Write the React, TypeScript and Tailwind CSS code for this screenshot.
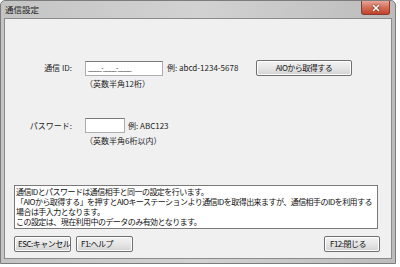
import { X } from "lucide-react";

const font = "font-['Meiryo_UI','Noto_Sans_CJK_JP','Liberation_Sans',sans-serif]";

function WinButton({ label, className }: { label: string; className?: string }) {
  return (
    <button
      className={`flex h-[16px] items-center whitespace-nowrap rounded-[2px] border border-[#707070] bg-gradient-to-b from-[#f3f3f3] via-[#e6e6e6] to-[#d3d3d3] text-[8px] leading-none tracking-[-0.5px] text-[#111] shadow-[inset_0_0_0_1px_#fcfcfc] ${className ?? ""}`}
    >
      {label}
    </button>
  );
}

function MemoText() {
  return (
    <div className="h-[44px] w-[364px] overflow-hidden border border-[#7a7a7a] bg-white px-[1px] pt-[1px] text-[8px] leading-[10px] tracking-[-0.55px] text-[#111]">
      <p>通信IDとパスワードは通信相手と同一の設定を行います。</p>
      <p className="whitespace-nowrap">
        「AIOから取得する」を押すとAIOキーステーションより通信IDを取得出来ますが、通信相手のIDを利用する
      </p>
      <p>場合は手入力となります。</p>
      <p>この設定は、現在利用中のデータのみ有効となります。</p>
    </div>
  );
}

export default function App() {
  return (
    <div className={`h-[267px] w-[400px] bg-white ${font}`}>
      <div className="flex h-[264px] w-[396px] flex-col rounded-t-[5px] border border-[#7c7c7c] bg-gradient-to-r from-[#c4c4c4] via-[#d2d2d2] to-[#bcbcbc]">
        {/* title bar */}
        <div className="flex h-[17px] shrink-0 items-start justify-between">
          <span className="pl-[4px] pt-[3px] text-[8.5px] leading-[10px] text-[#1c1c1c]">通信設定</span>
          <div className="mr-[5px] flex h-[14px] w-[29px] items-center justify-center rounded-b-[3px] border border-t-0 border-[#8a3a2c] bg-gradient-to-b from-[#e9a596] via-[#d26e58] to-[#c24129]">
            <X size={10} strokeWidth={3.5} className="text-white drop-shadow-[0_0_1px_#5a1a10]" />
          </div>
        </div>

        {/* client area */}
        <div className="mx-[3px] mb-[4px] flex flex-1 flex-col border border-[#8b8b8b] bg-[#f0f0f0] text-[8px] leading-[10px] text-[#1c1c1c]">
          <div className="mt-[41px] flex items-center">
            <span className="w-[67px] text-right">通信 ID:</span>
            <div className="ml-[13px] flex h-[15px] w-[78px] items-center border border-[#abadb3] border-t-[#7a7a7a] bg-white pl-[2px] font-['Liberation_Sans',sans-serif] text-[7px] tracking-[-0.6px] text-[#444]">
              ____-____-____
            </div>
            <span className="ml-[4px] w-[89px] whitespace-nowrap">例: abcd-1234-5678</span>
            <WinButton label="AIOから取得する" className="w-[96px] justify-center" />
          </div>
          <p className="ml-[80px] mt-[3px]">（英数半角12桁）</p>

          <div className="mt-[29px] flex items-center">
            <span className="w-[67px] text-right">パスワード:</span>
            <div className="ml-[13px] h-[15px] w-[40px] border border-[#abadb3] border-t-[#7a7a7a] bg-white" />
            <span className="ml-[3px] whitespace-nowrap">例: ABC123</span>
          </div>
          <p className="ml-[80px] mt-[3px]">（英数半角6桁以内）</p>

          <div className="ml-[9px] mt-[39px]">
            <MemoText />
          </div>

          <div className="ml-[9px] mr-[11px] mt-[7px] flex">
            <WinButton label="ESC:キャンセル" className="w-[57px] pl-[3px]" />
            <WinButton label="F1:ヘルプ" className="ml-[5px] w-[57px] pl-[4px]" />
            <WinButton label="F12:閉じる" className="ml-auto w-[56px] pl-[5px]" />
          </div>
        </div>
      </div>
    </div>
  );
}
